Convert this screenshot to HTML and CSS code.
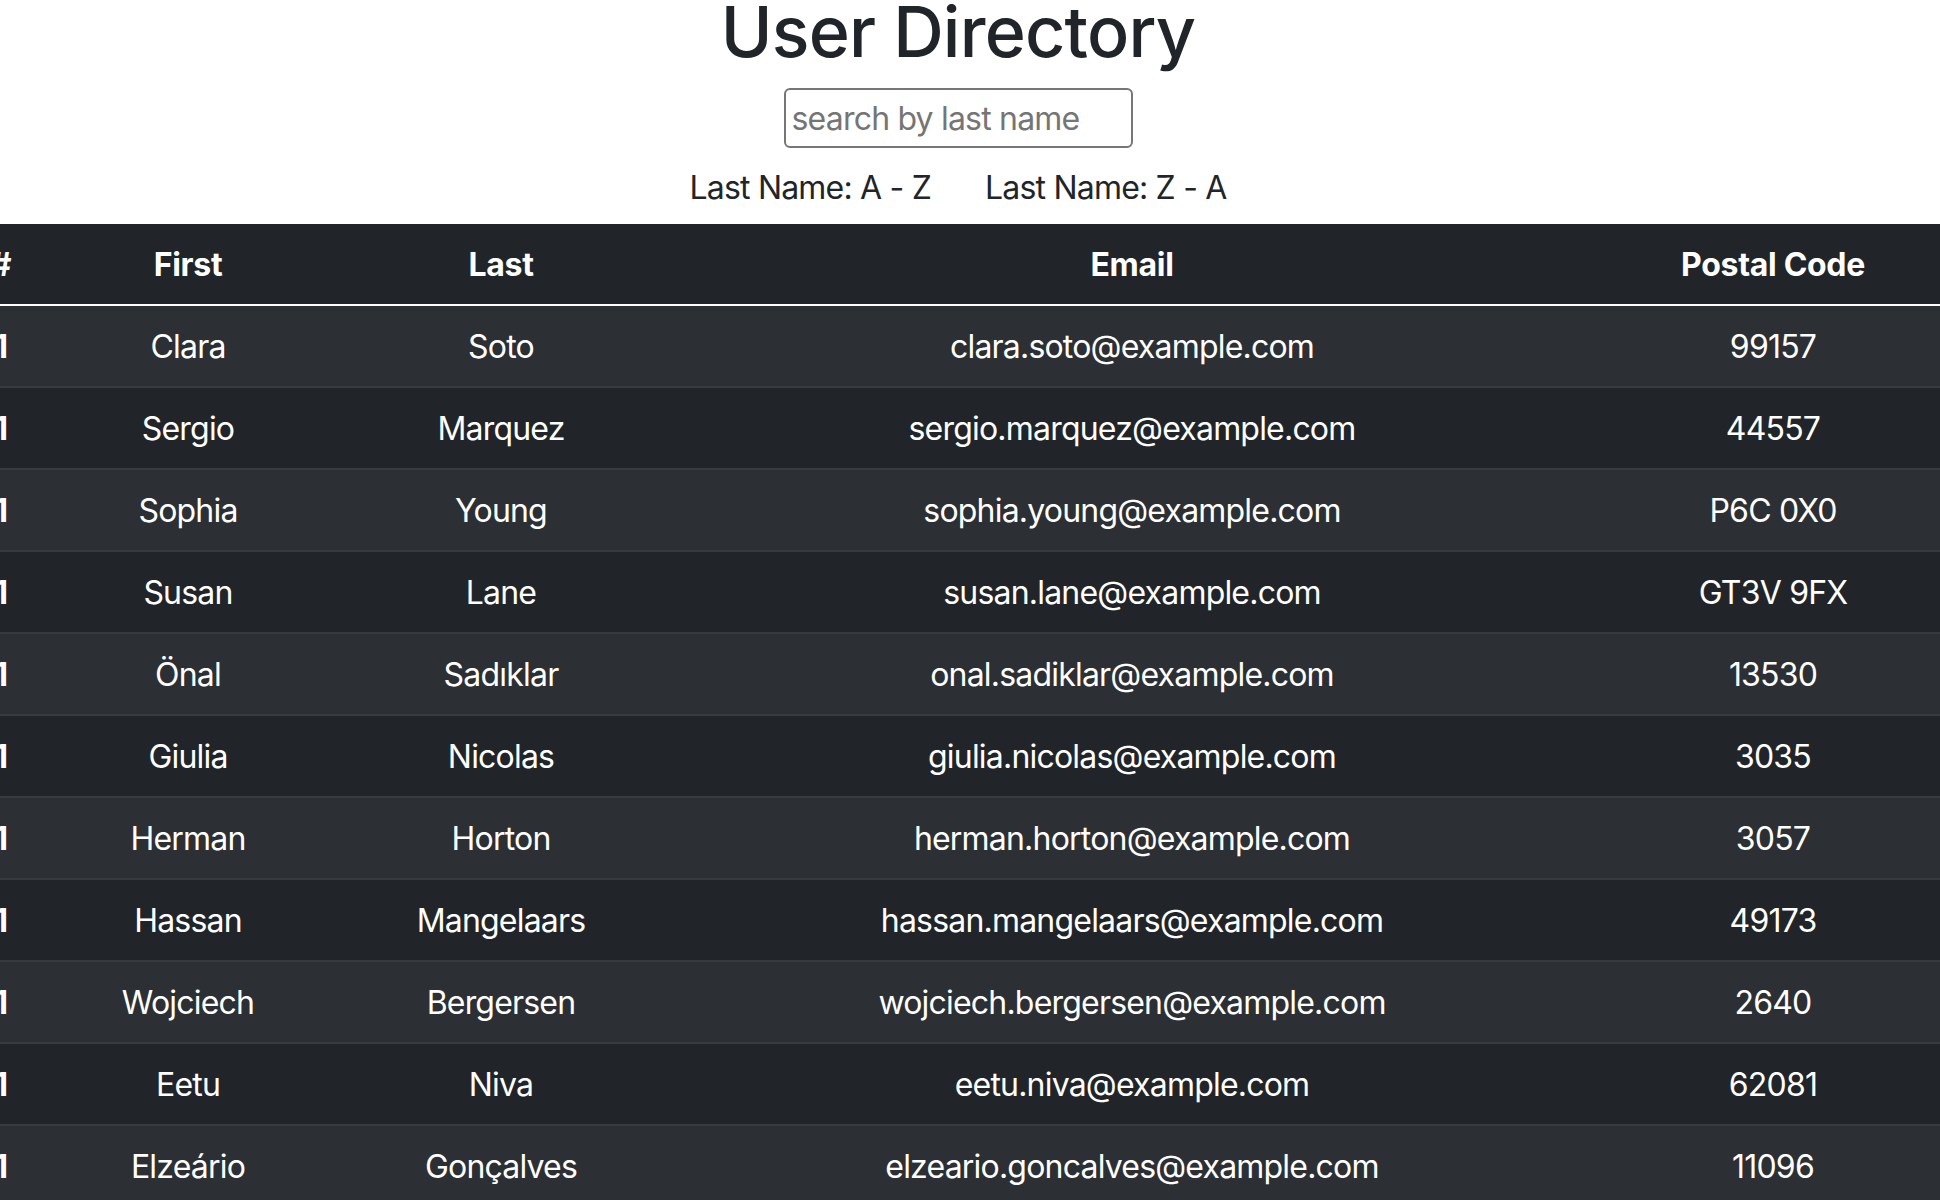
FILE: index.html
```html
<!DOCTYPE html>
<html lang="en">
<head>
<meta charset="utf-8">
<title>User Directory</title>
<link rel="stylesheet" href="styles.css">
</head>
<body>
<div class="page">
  <header class="top">
    <h1 class="title">User Directory</h1>
    <input class="search" type="text" placeholder="search by last name">
    <div class="sorts">
      <button class="sort" type="button">Last Name: A - Z</button>
      <button class="sort" type="button">Last Name: Z - A</button>
    </div>
  </header>
  <table class="users">
    <colgroup>
      <col class="c-num">
      <col class="c-first">
      <col class="c-last">
      <col class="c-email">
      <col class="c-postal">
    </colgroup>
    <thead>
      <tr><th>#</th><th>First</th><th>Last</th><th>Email</th><th>Postal Code</th></tr>
    </thead>
    <tbody>
      <tr><th>1</th><td>Clara</td><td>Soto</td><td>clara.soto@example.com</td><td>99157</td></tr>
      <tr><th>1</th><td>Sergio</td><td>Marquez</td><td>sergio.marquez@example.com</td><td>44557</td></tr>
      <tr><th>1</th><td>Sophia</td><td>Young</td><td>sophia.young@example.com</td><td>P6C 0X0</td></tr>
      <tr><th>1</th><td>Susan</td><td>Lane</td><td>susan.lane@example.com</td><td>GT3V 9FX</td></tr>
      <tr><th>1</th><td>Önal</td><td>Sadıklar</td><td>onal.sadiklar@example.com</td><td>13530</td></tr>
      <tr><th>1</th><td>Giulia</td><td>Nicolas</td><td>giulia.nicolas@example.com</td><td>3035</td></tr>
      <tr><th>1</th><td>Herman</td><td>Horton</td><td>herman.horton@example.com</td><td>3057</td></tr>
      <tr><th>1</th><td>Hassan</td><td>Mangelaars</td><td>hassan.mangelaars@example.com</td><td>49173</td></tr>
      <tr><th>1</th><td>Wojciech</td><td>Bergersen</td><td>wojciech.bergersen@example.com</td><td>2640</td></tr>
      <tr><th>1</th><td>Eetu</td><td>Niva</td><td>eetu.niva@example.com</td><td>62081</td></tr>
      <tr><th>1</th><td>Elzeário</td><td>Gonçalves</td><td>elzeario.goncalves@example.com</td><td>11096</td></tr>
    </tbody>
  </table>
</div>
</body>
</html>
```
FILE: styles.css
```css
html, body {
  margin: 0;
  padding: 0;
  overflow: hidden;
  background: #ffffff;
}

body {
  font-family: Inter, "Noto Sans", "Liberation Sans", sans-serif;
  font-size: 32px;
  line-height: 1.5;
  letter-spacing: -0.8px;
  color: #212529;
}

.top {
  display: flex;
  flex-direction: column;
  align-items: center;
  margin-right: 24px;
}

.title {
  margin: 0;
  font-size: 70px;
  font-weight: 500;
  line-height: 64px;
  letter-spacing: -0.8px;
  color: #212529;
}

.search {
  box-sizing: border-box;
  width: 349px;
  height: 60px;
  margin-top: 24px;
  padding: 0 6px;
  border: 2px solid #767676;
  border-radius: 6px;
  font-family: inherit;
  font-size: 32px;
  letter-spacing: -0.8px;
  color: #212529;
  background: #ffffff;
}

.search::placeholder {
  color: #757575;
}

.sorts {
  display: flex;
  gap: 54px;
  margin-top: 19px;
}

.sort {
  padding: 0;
  border: 0;
  background: none;
  font-family: inherit;
  font-size: 32px;
  line-height: 42px;
  letter-spacing: -0.8px;
  color: #212529;
}

.users {
  table-layout: fixed;
  width: 1974px;
  margin: 15px 0 0 -32px;
  border-collapse: collapse;
  background: #212529;
  color: #ffffff;
  text-align: center;
}

.c-num { width: 66px; }
.c-first { width: 308px; }
.c-last { width: 318px; }
.c-email { width: 944px; }
.c-postal { width: 338px; }

.users th,
.users td {
  padding: 17px 16px 15px;
  line-height: 48px;
  border-bottom: 2px solid #373b3e;
  white-space: nowrap;
}

.users th {
  font-weight: 700;
  letter-spacing: -0.3px;
}

.users td {
  font-weight: 400;
}

.users thead th {
  border-bottom: 2px solid #ffffff;
}

.users tbody tr:nth-child(odd) {
  background: #2c3034;
}
```
